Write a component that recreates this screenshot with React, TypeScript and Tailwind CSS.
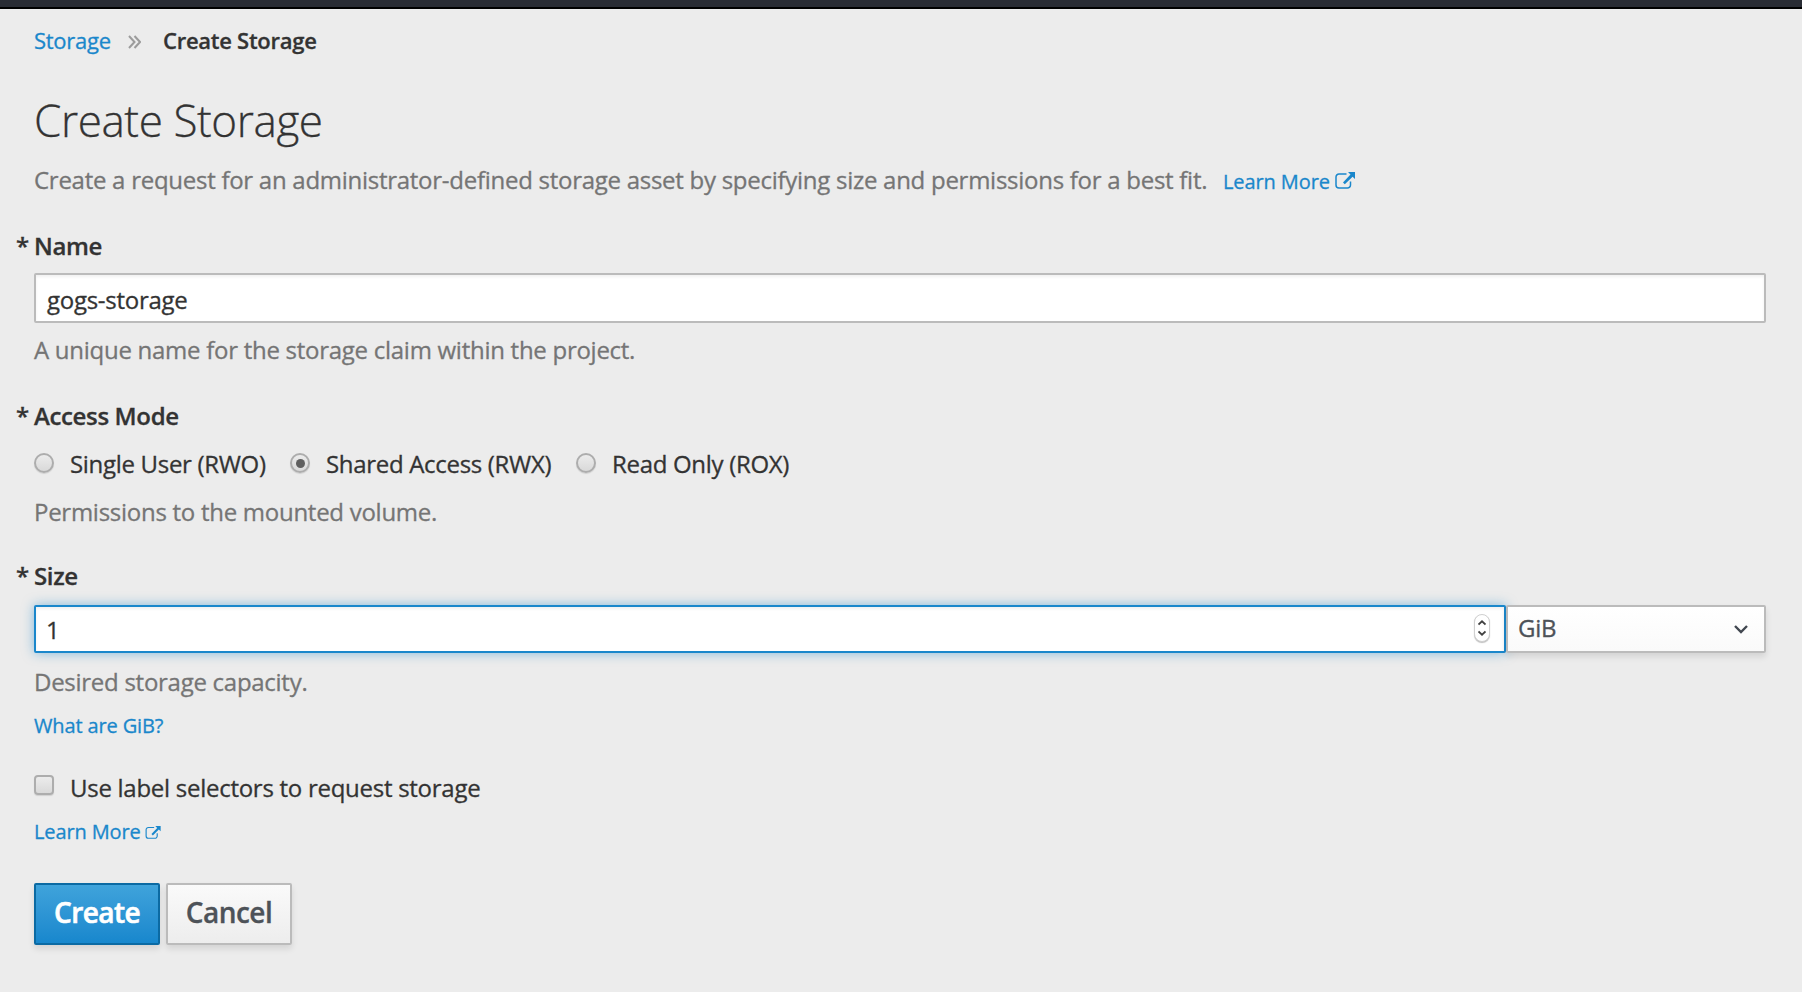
import React from "react";

function ExternalIcon({ className }: { className: string }) {
  return (
    <svg viewBox="0 0 20 17" className={className} fill="none" aria-hidden="true">
      <path d="M11.5 2H4A3 3 0 0 0 1 5V13A3 3 0 0 0 4 16H12.5A3 3 0 0 0 15.500 13V9.500" stroke="currentColor" strokeWidth="1.500" />
      <path d="M13 0H20V7L17.600 4.700L9.800 12.300L8 10.500L15.500 2.600Z" fill="currentColor" />
    </svg>
  );
}

function FieldLabel({ className, children }: { className: string; children: React.ReactNode }) {
  return (
    <div className={`flex h-8 text-[24px] leading-8 font-semibold tracking-[-0.36px] ${className}`}>
      <span className="-ml-[18px] w-[18px] shrink-0">*</span>
      <span>{children}</span>
    </div>
  );
}

function Radio({ checked = false }: { checked?: boolean }) {
  return (
    <span className="flex size-5 shrink-0 items-center justify-center rounded-full border-2 border-[#adadad] bg-linear-to-b from-[#ececec] to-[#d9d9d9] shadow-[0_1px_1px_rgba(0,0,0,0.12)]">
      {checked && <span className="size-[9px] rounded-full bg-[#5f5f5f]" />}
    </span>
  );
}

function Option({ label, checked, width }: { label: string; checked?: boolean; width: string }) {
  return (
    <label className={`flex h-8 shrink-0 whitespace-nowrap ${width}`}>
      <span className="pt-[5px]">
        <Radio checked={checked} />
      </span>
      <span className="ml-4 text-[24px] leading-8 tracking-[-0.31px]">{label}</span>
    </label>
  );
}

export default function App() {
  return (
    <div className="h-[992px] w-[1802px] overflow-hidden bg-[#ececec] font-['Open_Sans','Noto_Sans',sans-serif] tracking-[-0.27px] text-[#333333] [-webkit-text-stroke:0.3px]">
      <div className="h-[9px] border-b-2 border-black bg-[#292c34]" />
      <main className="flex flex-col pr-9 pl-[34px]">
        <nav className="mt-[15px] flex h-8 items-center text-[22px] leading-8 whitespace-nowrap">
          <a className="w-[94px] text-[#1a87cb]">Storage</a>
          <svg viewBox="0 0 13 14" className="mt-[3px] h-[14px] w-[13px]" fill="none" stroke="#9c9c9c" strokeWidth="2" aria-hidden="true">
            <path d="M1 1L6.500 7L1 13M6.500 1L12 7L6.500 13" />
          </svg>
          <span className="ml-[22px] font-semibold">Create Storage</span>
        </nav>

        <h1 className="mt-[34px] h-[60px] text-[44px] leading-[60px] font-light tracking-[-0.4px] whitespace-nowrap">Create Storage</h1>

        <div className="mt-[14px] flex h-8 text-[24px] leading-8 whitespace-nowrap text-[#757575]">
          <span className="w-[1189px]">Create a request for an administrator-defined storage asset by specifying size and permissions for a best fit.</span>
          <a className="flex text-[20px] leading-[36px] tracking-[-0.1px] text-[#1a87cb]">
            <span className="w-[112px]">Learn More</span>
            <ExternalIcon className="mt-2 h-[17px] w-5" />
          </a>
        </div>

        <FieldLabel className="mt-[34px]">Name</FieldLabel>
        <div className="mt-[11px] h-[50px] rounded-[2px] border-2 border-[#bbbbbb] bg-white pt-[9px] pl-[11px] text-[24px] leading-8 shadow-[inset_0_2px_3px_rgba(0,0,0,0.06)]">gogs-storage</div>
        <p className="mt-[11px] h-8 text-[24px] leading-8 text-[#757575]">A unique name for the storage claim within the project.</p>

        <FieldLabel className="mt-[34px]">Access Mode</FieldLabel>
        <div className="mt-4 flex h-8">
          <Option label="Single User (RWO)" width="w-[256px]" />
          <Option label="Shared Access (RWX)" checked width="w-[286px]" />
          <Option label="Read Only (ROX)" width="w-[256px]" />
        </div>
        <p className="mt-4 h-8 text-[24px] leading-8 text-[#757575]">Permissions to the mounted volume.</p>

        <FieldLabel className="mt-8">Size</FieldLabel>
        <div className="mt-[13px] flex h-12">
          <div className="z-10 flex w-[1472px] items-start justify-between rounded-[2px] border-2 border-[#1a87cb] bg-white pt-[7px] pr-[14px] pl-[10px] shadow-[inset_0_2px_3px_rgba(0,0,0,0.06),0_0_12px_rgba(26,135,203,0.5)]">
            <span className="text-[24px] leading-8">1</span>
            <span className="flex h-7 w-4 items-center justify-center rounded-full border border-[#d0d0d0] bg-white shadow-[0_1px_1px_rgba(0,0,0,0.25)]">
              <svg viewBox="0 0 8 16" className="h-4 w-2 shrink-0" fill="none" stroke="#414141" strokeWidth="1.800" aria-hidden="true">
                <path d="M0.500 4.500L4 1.300L7.500 4.500M0.500 11.500L4 14.700L7.500 11.500" />
              </svg>
            </span>
          </div>
          <div className="z-20 flex flex-1 items-start justify-between rounded-[2px] border-2 border-[#bbbbbb] bg-linear-to-b from-white to-[#fafafa] pt-[5px] pr-4 pl-[10px] text-[#4d5258] shadow-[0_4px_6px_rgba(3,3,3,0.1)]">
            <span className="text-[24px] leading-8">GiB</span>
            <svg viewBox="0 0 14 10" className="mt-3 h-[10px] w-[14px]" fill="none" stroke="#414750" strokeWidth="2.400" aria-hidden="true">
              <path d="M1 2L7 8L13 2" />
            </svg>
          </div>
        </div>
        <p className="mt-[13px] h-8 text-[24px] leading-8 text-[#757575]">Desired storage capacity.</p>
        <a className="mt-[14px] h-7 text-[20px] leading-7 tracking-[-0.13px] text-[#1a87cb]">What are GiB?</a>

        <label className="mt-8 flex h-8">
          <span className="mt-[3px] size-5 rounded-[4px] border-2 border-[#adadad] bg-linear-to-b from-[#ececec] to-[#d9d9d9] shadow-[0_1px_1px_rgba(0,0,0,0.12)]" />
          <span className="ml-4 text-[24px] leading-8">Use label selectors to request storage</span>
        </label>
        <a className="mt-[14px] flex h-7 text-[20px] leading-7 tracking-[-0.13px] text-[#1a87cb]">
          <span className="w-[111px]">Learn More</span>
          <ExternalIcon className="mt-2 h-[13px] w-4" />
        </a>

        <div className="mt-[37px] flex gap-[6px] text-[28px] leading-[55px] font-semibold tracking-[-0.55px]">
          <button className="flex h-[62px] w-[126px] justify-center rounded-[2px] border-2 border-[#0b6aa3] bg-linear-to-b from-[#3fa3db] to-[#1787cd] text-white shadow-[0_4px_6px_rgba(3,3,3,0.1)] [-webkit-text-stroke:0.6px]">Create</button>
          <button className="flex h-[62px] w-[126px] justify-center rounded-[2px] border-2 border-[#bbbbbb] bg-linear-to-b from-[#fafafa] to-[#ededed] text-[#4d5258] shadow-[0_4px_6px_rgba(3,3,3,0.1)]">Cancel</button>
        </div>
      </main>
    </div>
  );
}
